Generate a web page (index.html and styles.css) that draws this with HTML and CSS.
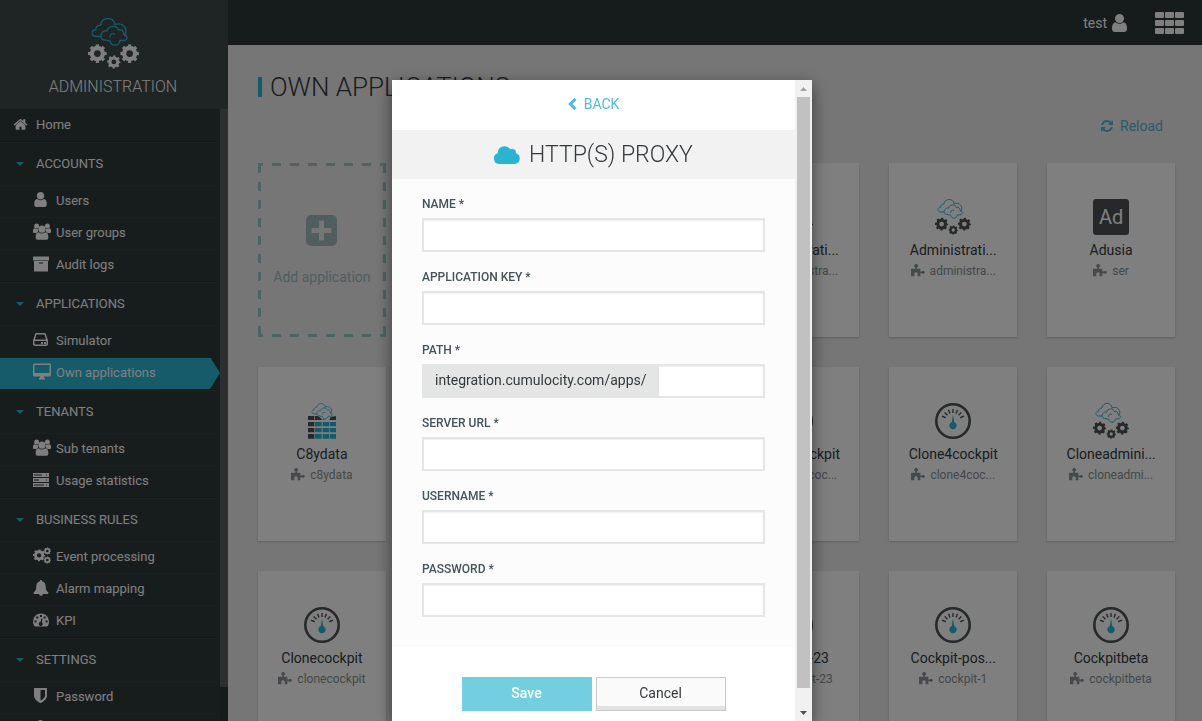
FILE: index.html
```html
<!DOCTYPE html>
<html lang="en">
<head>
<meta charset="utf-8">
<title>Own applications - Administration</title>
<link rel="stylesheet" href="styles.css">
</head>
<body>
<svg class="sprite" aria-hidden="true">
  <symbol id="clouds" viewBox="0 0 110 86">
    <g fill="none" stroke="currentColor" stroke-width="4" stroke-linejoin="round" stroke-linecap="round">
      <path d="M28 55H15C-2 54-2 36 13 35c0-10 7-14 14-13C31-4 65-5 70 17"/>
      <path d="M70 20c18-8 35 6 33 22-1 5-2 8-4 10"/>
      <path d="M43 66c-14 1-18-13-12-21 4-7 12-8 16-6 4-17 28-19 34-3 8-4 17 4 15 13 13 2 13 18-1 18H85c-3 19-27 18-29 1-4 0-10-1-13-2z"/>
      <path d="M56 57c-1-9 6-13 13-9"/>
    </g>
  </symbol>
  <symbol id="gear" viewBox="0 0 56 56">
    <g fill="none" stroke="currentColor">
      <circle cx="28" cy="28" r="16.500" stroke-width="13"/>
      <circle cx="28" cy="28" r="24" stroke-width="8" pathLength="16" stroke-dasharray="1 1" stroke-dashoffset=".5"/>
    </g>
  </symbol>
  <symbol id="admin" viewBox="0 0 152 152">
    <svg class="teal" x="10" y="0" width="110" height="86"><use href="#clouds"/></svg>
    <use href="#gear" x="0" y="78" width="56" height="56"/>
    <use href="#gear" x="96" y="78" width="56" height="56"/>
    <use href="#gear" x="57" y="111" width="40" height="40"/>
  </symbol>
  <symbol id="gauge" viewBox="0 0 36 36">
    <circle cx="18" cy="18" r="16.700" fill="none" stroke="currentColor" stroke-width="2.600"/>
    <g stroke="currentColor" stroke-width="1.400">
      <path id="tk" d="M18 6v4"/>
      <use href="#tk" transform="rotate(22 18 18)"/><use href="#tk" transform="rotate(44 18 18)"/><use href="#tk" transform="rotate(66 18 18)"/>
      <use href="#tk" transform="rotate(-22 18 18)"/><use href="#tk" transform="rotate(-44 18 18)"/><use href="#tk" transform="rotate(-66 18 18)"/>
    </g>
    <path class="teal-fill" d="M18 11.500l1.200 7.500a3.700 3.700 0 1 1-2.400 0z"/>
  </symbol>
  <symbol id="datagrid" viewBox="0 0 84 108">
    <path fill="currentColor" d="M0 39h19v12H0zM21 39h8l12 8v4H21zM84 39v12H64l4-9zM43 51l4-2 4 2zM0 57h19v13H0zM0 75h19v13H0zM0 93h19v14H0z"/>
    <path class="teal-fill" d="M21 57h20v13H21zM44 57h19v13H44zM65 57h19v13H65zM21 75h20v13H21zM44 75h19v13H44zM65 75h19v13H65zM21 93h20v14H21zM44 93h19v14H44zM65 93h19v14H65z"/>
    <svg class="teal" x="10" y="0" width="65" height="51"><use href="#clouds"/></svg>
  </symbol>
  <symbol id="puzzle" viewBox="0 0 42 38">
    <path fill="currentColor" d="M0 14h13v-4a5.500 5.500 0 1 1 5 0v4h10v8h5a4.500 4.500 0 1 1 0 5h-5v9h-9c3-8 0-12-4-12s-7 4-4 12H0z"/>
  </symbol>
  <symbol id="user" viewBox="256 128 1280 1536">
    <path fill="currentColor" d="M1536 1399q0 109-62.500 187t-150.500 78h-854q-88 0-150.500-78t-62.500-187q0-85 8.500-160.500t31.500-152 58.500-131 94-89 134.500-34.500q131 128 313 128t313-128q76 0 134.500 34.500t94 89 58.500 131 31.500 152 8.500 160.500zm-256-887q0 159-112.500 271.500t-271.500 112.500-271.500-112.500-112.500-271.500 112.500-271.500 271.500-112.500 271.500 112.500 112.500 271.500z"/>
  </symbol>
  <symbol id="home" viewBox="0 128 1792 1536">
    <path fill="currentColor" d="M1472 992v480q0 26-19 45t-45 19h-384v-384h-256v384h-384q-26 0-45-19t-19-45v-480q0-1 .5-3t.5-3l575-474 575 474q1 2 1 6zm223-69l-62 74q-8 9-21 11h-3q-13 0-21-7l-692-577-692 577q-12 8-24 7-13-2-21-11l-62-74q-8-10-7-23.500t11-21.500l719-599q32-26 76-26t76 26l244 204v-195q0-14 9-23t23-9h192q14 0 23 9t9 23v408l219 182q10 8 11 21.500t-7 23.500z"/>
  </symbol>
  <symbol id="users" viewBox="0 0 18 17">
    <g fill="currentColor">
      <circle cx="3.600" cy="3" r="2.500"/><circle cx="14.400" cy="3" r="2.500"/>
      <path d="M0 9V7.500C0 6 1 5.300 2 5.300c1 .8 2.400.8 3.200.3L5 8.800 3.500 10H1.500C.6 10 0 9.600 0 9zM18 9V7.500c0-1.500-1-2.200-2-2.200-1 .8-2.400.8-3.200.3l.2 3.200 1.500 1.200h2c.9 0 1.500-.4 1.500-1z"/>
      <circle cx="9" cy="6.200" r="3.600"/>
      <path d="M2.600 14.500c0-3.500 1-5 3.200-5.200 1.800 1.700 4.600 1.700 6.400 0 2.200.2 3.200 1.700 3.200 5.200 0 1.600-1 2.300-2.300 2.300H4.900c-1.300 0-2.300-.7-2.300-2.300z"/>
    </g>
  </symbol>
  <symbol id="archive" viewBox="0 0 16 15">
    <path fill="currentColor" fill-rule="evenodd" d="M0 0h16v4H0zM1 4.500h14V15H1zM6 6v1h4V6z"/>
  </symbol>
  <symbol id="drive" viewBox="0 0 15 13">
    <path fill="currentColor" fill-rule="evenodd" d="M3.500 0h8c.8 0 1.300.5 1.500 1.200l2 6.300V11c0 1-.8 2-2 2H2c-1.200 0-2-1-2-2V7.500l2-6.300C2.200.5 2.700 0 3.500 0zm0 1.500L2 6.500h11l-1.500-5zM1.500 8v3c0 .3.200.5.500.5h11c.3 0 .5-.2.500-.5V8z"/>
    <path fill="currentColor" d="M8 9h2v2H8zM11 9h2v2h-2z"/>
  </symbol>
  <symbol id="desktop" viewBox="0 0 18 16">
    <path fill="currentColor" fill-rule="evenodd" d="M1.500 0h15c.9 0 1.500.6 1.500 1.500v10c0 .9-.6 1.500-1.500 1.500H11v1.500h1V16H6v-1.500h1V13H1.500C.6 13 0 12.400 0 11.500v-10C0 .6.600 0 1.500 0zm0 1.500v8h15v-8z"/>
  </symbol>
  <symbol id="server" viewBox="0 0 16 14">
    <path fill="currentColor" fill-rule="evenodd" d="M0 0h16v4H0zM1 1.500v1h8v-1zM13 1.500v1h1v-1zM0 5h16v4H0zM1 6.500v1h5v-1zM13 6.500v1h1v-1zM0 10h16v4H0zM1 11.500v1h10v-1zM13 11.500v1h1v-1z"/>
  </symbol>
  <symbol id="cogs" viewBox="0 0 56 51">
    <use href="#gear" x="0" y="6" width="38" height="38"/>
    <use href="#gear" x="33" y="0" width="23" height="23"/>
    <use href="#gear" x="33" y="28" width="23" height="23"/>
  </symbol>
  <symbol id="bell" viewBox="0 0 16 17">
    <path fill="currentColor" d="M8 0c.7 0 1.200.5 1.100 1.300C12 2 13 4.300 13 7c0 3.500 1.200 5.200 3 6.500 0 .8-.6 1.300-1.300 1.300H10A2 2 0 0 1 6 14.800H1.300C.6 14.800 0 14.300 0 13.500 1.800 12.200 3 10.500 3 7c0-2.700 1-5 3.900-5.700C6.800.5 7.300 0 8 0z"/>
  </symbol>
  <symbol id="dash" viewBox="0 0 16 13">
    <path fill="currentColor" fill-rule="evenodd" d="M8 0a8 8 0 0 1 8 8c0 1.800-.5 3.400-1.300 4.600-.2.300-.4.400-.7.400H2c-.3 0-.5-.1-.7-.4A8.500 8.500 0 0 1 0 8a8 8 0 0 1 8-8zM7 1.500v2h2v-2zM3.300 3v2h2V3zM10.700 3v2h2V3zM1.500 7v2h2V7zM12.500 7v2h2V7zM8.500 5L7.400 8.600a1.900 1.900 0 1 0 1.400.3L9.600 5.300z"/>
  </symbol>
  <symbol id="shield" viewBox="0 0 13 15">
    <path fill="currentColor" fill-rule="evenodd" d="M0 0h13v7.500c0 3.300-3 6-6.500 7.500C3 13.500 0 10.800 0 7.500zM6.500 2v10.500c2.500-1.400 4.500-3 4.500-5V2z"/>
  </symbol>
  <symbol id="refresh" viewBox="128 128 1536 1536">
    <path fill="currentColor" d="M1639 1056q0 5-1 7-64 268-268 434.500t-478 166.500q-146 0-282.500-55t-243.500-157l-129 129q-19 19-45 19t-45-19-19-45v-448q0-26 19-45t45-19h448q26 0 45 19t19 45-19 45l-137 137q71 66 161 102t187 36q134 0 250-65t186-179q11-17 53-117 8-23 30-23h192q13 0 22.500 9.500t9.500 22.500zm25-800v448q0 26-19 45t-45 19h-448q-26 0-45-19t-19-45 19-45l138-138q-148-137-349-137-134 0-250 65t-186 179q-11 17-53 117-8 23-30 23h-199q-13 0-22.500-9.500t-9.500-22.500v-7q65-268 270-434.500t480-166.500q146 0 284 55.500t245 156.500l130-129q19-19 45-19t45 19 19 45z"/>
  </symbol>
  <symbol id="apps" viewBox="0 0 29 22">
    <g fill="currentColor">
      <rect width="9" height="6" rx="1"/><rect x="10" width="9" height="6" rx="1"/><rect x="20" width="9" height="6" rx="1"/>
      <rect y="8" width="9" height="6" rx="1"/><rect x="10" y="8" width="9" height="6" rx="1"/><rect x="20" y="8" width="9" height="6" rx="1"/>
      <rect y="16" width="9" height="6" rx="1"/><rect x="10" y="16" width="9" height="6" rx="1"/><rect x="20" y="16" width="9" height="6" rx="1"/>
    </g>
  </symbol>
  <symbol id="cloud" viewBox="0 0 26 19">
    <path fill="currentColor" d="M20.500 19h-15A5.500 5.500 0 0 1 3.700 8.300 6.900 6.900 0 0 1 16.300 4.300 3.800 3.800 0 0 1 22 8.300a5.500 5.500 0 0 1-1.500 10.700z"/>
  </symbol>
  <symbol id="plus" viewBox="0 0 31 31">
    <path fill="currentColor" fill-rule="evenodd" d="M5 0h21a5 5 0 0 1 5 5v21a5 5 0 0 1-5 5H5a5 5 0 0 1-5-5V5a5 5 0 0 1 5-5zm8 5.500v7.500H5.500v5H13v7.500h5V18h7.500v-5H18V5.500z"/>
  </symbol>
  <symbol id="chevron" viewBox="0 0 9 12">
    <path fill="none" stroke="currentColor" stroke-width="3" d="M7.500 1L2.300 6l5.200 5"/>
  </symbol>
</svg>

<div class="app">
  <aside class="sidebar">
    <div class="brand">
      <svg class="brand-logo"><use href="#admin"/></svg>
      <span>ADMINISTRATION</span>
    </div>
    <div class="nav-wrap">
      <nav class="nav">
        <a class="item top" href="#"><svg class="ico w15"><use href="#home"/></svg>Home</a>
        <button class="group" type="button">ACCOUNTS</button>
        <a class="item" href="#"><svg class="ico w13"><use href="#user"/></svg>Users</a>
        <a class="item" href="#"><svg class="ico"><use href="#users"/></svg>User groups</a>
        <a class="item" href="#"><svg class="ico w16"><use href="#archive"/></svg>Audit logs</a>
        <button class="group" type="button">APPLICATIONS</button>
        <a class="item" href="#"><svg class="ico w15"><use href="#drive"/></svg>Simulator</a>
        <a class="item active" href="#"><svg class="ico"><use href="#desktop"/></svg>Own applications</a>
        <button class="group" type="button">TENANTS</button>
        <a class="item" href="#"><svg class="ico"><use href="#users"/></svg>Sub tenants</a>
        <a class="item" href="#"><svg class="ico w16"><use href="#server"/></svg>Usage statistics</a>
        <button class="group" type="button">BUSINESS RULES</button>
        <a class="item" href="#"><svg class="ico"><use href="#cogs"/></svg>Event processing</a>
        <a class="item" href="#"><svg class="ico w16"><use href="#bell"/></svg>Alarm mapping</a>
        <a class="item" href="#"><svg class="ico w16"><use href="#dash"/></svg>KPI</a>
        <button class="group" type="button">SETTINGS</button>
        <a class="item" href="#"><svg class="ico w13"><use href="#shield"/></svg>Password</a>
        <a class="item" href="#" aria-label="Account"><svg class="ico w13"><use href="#user"/></svg></a>
      </nav>
      <div class="nav-scroll"><div class="nav-thumb"></div></div>
    </div>
  </aside>

  <div class="page">
    <header class="topbar">
      <button class="top-btn" type="button">test <svg class="top-user"><use href="#user"/></svg></button>
      <button class="top-btn" type="button" aria-label="Applications"><svg class="top-apps"><use href="#apps"/></svg></button>
    </header>
    <main class="main">
      <h1 class="title">OWN APPLICATIONS</h1>
      <div class="actions"><a class="reload" href="#"><svg><use href="#refresh"/></svg>Reload</a></div>
      <div class="grid">
        <button class="card add" type="button">
          <svg class="dashes" aria-hidden="true">
            <line x1="0" y1="1.5" x2="100%" y2="1.5"/><line x1="0" y1="100%" x2="100%" y2="100%" class="far"/>
            <line x1="1.5" y1="0" x2="1.5" y2="100%" class="v"/><line x1="100%" y1="0" x2="100%" y2="100%" class="v far"/>
          </svg>
          <svg class="add-ico"><use href="#plus"/></svg>
          <span>Add application</span>
        </button>
        <div class="card"></div>
        <div class="card"></div>
        <div class="card"><svg class="app-ico"><use href="#admin"/></svg><span class="name">Administrati...</span><span class="slug"><svg><use href="#puzzle"/></svg>administra...</span></div>
        <div class="card"><svg class="app-ico"><use href="#admin"/></svg><span class="name">Administrati...</span><span class="slug"><svg><use href="#puzzle"/></svg>administra...</span></div>
        <div class="card"><span class="app-ico badge">Ad</span><span class="name">Adusia</span><span class="slug"><svg><use href="#puzzle"/></svg>ser</span></div>

        <div class="card"><svg class="app-ico"><use href="#datagrid"/></svg><span class="name">C8ydata</span><span class="slug"><svg><use href="#puzzle"/></svg>c8ydata</span></div>
        <div class="card"></div>
        <div class="card"></div>
        <div class="card"><svg class="app-ico"><use href="#gauge"/></svg><span class="name">Clone3cockpit</span><span class="slug"><svg><use href="#puzzle"/></svg>clone3coc...</span></div>
        <div class="card"><svg class="app-ico"><use href="#gauge"/></svg><span class="name">Clone4cockpit</span><span class="slug"><svg><use href="#puzzle"/></svg>clone4coc...</span></div>
        <div class="card"><svg class="app-ico"><use href="#admin"/></svg><span class="name">Cloneadmini...</span><span class="slug"><svg><use href="#puzzle"/></svg>cloneadmi...</span></div>

        <div class="card"><svg class="app-ico"><use href="#gauge"/></svg><span class="name">Clonecockpit</span><span class="slug"><svg><use href="#puzzle"/></svg>clonecockpit</span></div>
        <div class="card"></div>
        <div class="card"></div>
        <div class="card"><svg class="app-ico"><use href="#gauge"/></svg><span class="name">Cockpit-23</span><span class="slug"><svg><use href="#puzzle"/></svg>cockpit-23</span></div>
        <div class="card"><svg class="app-ico"><use href="#gauge"/></svg><span class="name">Cockpit-pos...</span><span class="slug"><svg><use href="#puzzle"/></svg>cockpit-1</span></div>
        <div class="card"><svg class="app-ico"><use href="#gauge"/></svg><span class="name">Cockpitbeta</span><span class="slug"><svg><use href="#puzzle"/></svg>cockpitbeta</span></div>
      </div>
    </main>
  </div>
</div>

<div class="overlay">
  <div class="modal" role="dialog" aria-modal="true" aria-labelledby="dlg-title">
    <form class="dialog">
      <div class="back"><a href="#"><svg><use href="#chevron"/></svg>BACK</a></div>
      <h2 class="dlg-title" id="dlg-title"><svg><use href="#cloud"/></svg>HTTP(S) PROXY</h2>
      <div class="fields">
        <div class="field"><label for="name">NAME *</label><input id="name" type="text"></div>
        <div class="field"><label for="key">APPLICATION KEY *</label><input id="key" type="text"></div>
        <div class="field"><label for="path">PATH *</label><div class="path"><span>integration.cumulocity.com/apps/</span><input id="path" type="text"></div></div>
        <div class="field"><label for="url">SERVER URL *</label><input id="url" type="text"></div>
        <div class="field"><label for="usern">USERNAME *</label><input id="usern" type="text"></div>
        <div class="field"><label for="pass">PASSWORD *</label><input id="pass" type="password"></div>
      </div>
      <div class="buttons"><button class="btn save" type="button">Save</button><button class="btn cancel" type="button">Cancel</button></div>
    </form>
    <div class="scroll" aria-hidden="true">
      <svg class="arrow dim" viewBox="0 0 17 17"><path d="M5 11h7L8.500 7z"/></svg>
      <div class="thumb"></div>
      <svg class="arrow" viewBox="0 0 17 17"><path d="M5 7h7l-3.500 4z"/></svg>
    </div>
  </div>
</div>
</body>
</html>
```

FILE: styles.css
```css
* { box-sizing: border-box; }
body {
  margin: 0;
  height: 100vh;
  overflow: hidden;
  font-family: Roboto, "Liberation Sans", sans-serif;
  font-size: 14px;
  line-height: 20px;
  color: #333a3c;
  background: #ececec;
}
a { color: inherit; text-decoration: none; }
button { font: inherit; color: inherit; border: 0; background: none; padding: 0; }
.sprite { position: absolute; width: 0; height: 0; }
.teal { color: #29b4d2; }
.teal-fill { fill: #29b4d2; }

.app { display: flex; height: 100vh; overflow: hidden; }

/* sidebar */
.sidebar { flex: 0 0 228px; display: flex; flex-direction: column; background: #2e3a3a; color: #fff; }
.brand {
  flex: none;
  height: 109px;
  padding: 18px 2px 0 0;
  display: flex;
  flex-direction: column;
  align-items: center;
  gap: 8px;
  background: #3e4a49;
  font-size: 16px;
  font-weight: 300;
}
.brand-logo { width: 51px; height: 51px; }
.nav-wrap { flex: 1; min-height: 0; display: flex; }
.nav { flex: 1; overflow: hidden; font-size: 13px; }
.nav-scroll { flex: 0 0 8px; background: #2a3535; }
.nav-thumb { height: 578px; background: #565e5f; }
.item {
  display: flex;
  align-items: center;
  gap: 5px;
  height: 32px;
  padding: 0 0 2px 33px;
  border-top: 1px solid #344040;
}
.item.top { padding: 0 0 0 13px; border-top: 0; }
.ico { flex: none; width: 18px; height: 17px; margin-bottom: 2px; }
.w16 { width: 16px; height: 16px; margin-right: 2px; }
.w15 { width: 15px; height: 15px; margin-right: 3px; }
.w13 { width: 13px; height: 15px; margin-left: 1px; margin-right: 4px; }
.active {
  background: #2cb6d4;
  background-clip: padding-box;
  clip-path: polygon(0 0, 210px 0, 100% 50%, 210px 100%, 0 100%);
}
.group {
  display: flex;
  align-items: center;
  gap: 12px;
  width: 100%;
  height: 44px;
  padding-left: 16px;
  border-top: 1px solid #263131;
  box-shadow: inset 0 1px #364343;
}
.group::before { content: ""; border: 4px solid transparent; border-top-color: #2cb6d4; border-bottom: 0; }

/* page */
.page { flex: 1; min-width: 0; display: flex; flex-direction: column; }
.topbar {
  flex: none;
  height: 45px;
  padding-right: 18px;
  display: flex;
  align-items: center;
  justify-content: flex-end;
  gap: 28px;
  background: #2c3838;
  color: #fff;
}
.top-btn { display: flex; align-items: center; gap: 5px; }
.top-user { width: 15px; height: 18px; }
.top-apps { width: 29px; height: 22px; }
.main { padding: 27px 27px 0 30px; }
.title {
  margin: 0;
  display: flex;
  align-items: center;
  gap: 8px;
  font-size: 26px;
  font-weight: 300;
  line-height: 30px;
}
.title::before { content: ""; width: 4px; height: 20px; background: #29b4d2; }
.actions { display: flex; justify-content: flex-end; padding: 14px 12px 27px 0; }
.reload { display: flex; align-items: center; gap: 7px; color: #55b8d2; }
.reload svg { width: 12px; height: 12px; }
.grid { display: grid; grid-template-columns: repeat(6, minmax(0, 1fr)); grid-auto-rows: 174px; gap: 30px; }
.card {
  display: flex;
  flex-direction: column;
  align-items: center;
  padding-top: 36px;
  background: #fff;
  box-shadow: 0 1px 2px rgba(0, 0, 0, .2);
}
.app-ico { flex: none; width: 36px; height: 36px; margin-bottom: 5px; color: #4c5254; }
.badge {
  display: flex;
  align-items: center;
  justify-content: center;
  border-radius: 3px;
  background: #4c5054;
  color: #fff;
  font-size: 20px;
}
.slug { display: flex; align-items: center; gap: 5px; margin-top: 1px; font-size: 12px; color: #879193; }
.slug svg { width: 14px; height: 13px; margin-bottom: 2px; color: #8a9699; }
.add { position: relative; padding-top: 52px; justify-content: flex-start; gap: 21px; background: none; box-shadow: none; color: #a0bcc0; }
.add-ico { flex: none; width: 31px; height: 31px; color: #a0bcc0; }
.dashes { position: absolute; inset: 0; width: 100%; height: 100%; }
.dashes line { stroke: #a0c4c8; stroke-width: 3; stroke-dasharray: 9 9; stroke-dashoffset: 4; }
.dashes .v { stroke-dashoffset: -1; }
.dashes .far { stroke-width: 6; }

/* dialog */
.overlay {
  position: fixed;
  inset: 0;
  padding: 80px 0 0 2px;
  display: flex;
  justify-content: center;
  background: rgba(0, 0, 0, .5);
}
.modal { display: flex; width: 420px; background: #fff; box-shadow: 0 5px 15px rgba(0, 0, 0, .5); }
.dialog { flex: 1; min-width: 0; overflow: hidden; }
.back { height: 50px; padding-top: 14px; display: flex; justify-content: center; color: #55b8dc; }
.back a { display: flex; align-items: center; gap: 7px; height: 20px; }
.back svg { width: 9px; height: 12px; }
.dlg-title {
  margin: 0;
  height: 49px;
  display: flex;
  align-items: center;
  justify-content: center;
  gap: 9px;
  background: #f2f2f2;
  font-size: 23px;
  font-weight: 300;
}
.dlg-title svg { width: 26px; height: 19px; color: #29b4d2; }
.fields { min-height: 468px; padding: 15px 30px 30px; background: #fcfcfc; }
.field { height: 73px; }
.field:last-child { height: 58px; }
.field label { display: block; height: 24px; font-size: 12px; font-weight: 500; color: #43535a; }
.field input {
  display: block;
  width: 100%;
  height: 34px;
  padding: 0 10px;
  font: inherit;
  border: 2px solid #e4e6e6;
  border-radius: 0;
  background: #fff;
  box-shadow: inset 0 1px 1px rgba(0, 0, 0, .06);
}
.path { display: flex; }
.path span { flex: none; height: 34px; padding: 6px 12px 8px 13px; background: #e4e6e6; }
.path input { flex: 1; min-width: 0; border-left: 0; }
.buttons { display: flex; justify-content: center; gap: 4px; padding: 30px 0; }
.btn { width: 130px; height: 34px; padding-bottom: 2px; }
.save { background: #73cfe0; color: #fff; font-weight: 500; }
.cancel { border: 1px solid #c8c8c8; background: #fafafa; box-shadow: inset 0 -4px #e2e2e2; }
.scroll { flex: 0 0 17px; display: flex; flex-direction: column; background: #f1f1f1; }
.arrow { flex: none; width: 17px; height: 17px; fill: #505050; }
.arrow.dim { fill: #a3a3a3; }
.thumb { flex: 1; margin: 0 2px 16px; background: #c1c1c1; }
```
